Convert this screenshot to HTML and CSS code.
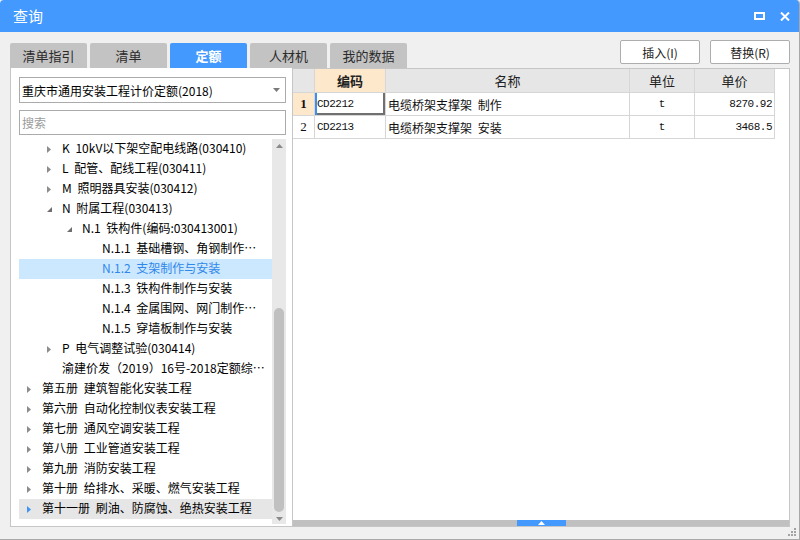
FILE: index.html
```html
<!DOCTYPE html>
<html lang="zh-CN">
<head>
<meta charset="utf-8">
<title>查询</title>
<link rel="stylesheet" href="styles.css">
</head>
<body>
<div class="window">
  <div class="titlebar">
    <span class="title">查询</span>
    <div class="win-ctrls">
      <svg width="11" height="8" viewBox="0 0 11 8"><rect x="1" y="1" width="9" height="6" fill="none" stroke="#fff" stroke-width="2"/></svg>
      <svg width="10" height="9" viewBox="0 0 10 9"><path d="M1 0.5 L9 8.5 M9 0.5 L1 8.5" stroke="#fff" stroke-width="2"/></svg>
    </div>
  </div>

  <div class="toolbar">
    <div class="tabs">
      <div class="tab">清单指引</div>
      <div class="tab">清单</div>
      <div class="tab active">定额</div>
      <div class="tab">人材机</div>
      <div class="tab">我的数据</div>
    </div>
    <div class="actions">
      <button class="btn">插入(I)</button>
      <button class="btn">替换(R)</button>
    </div>
  </div>

  <div class="main">
    <div class="left">
      <div class="select">
        <span>重庆市通用安装工程计价定额(2018)</span>
        <svg width="7" height="4" viewBox="0 0 7 4"><path d="M0 0 H7 L3.5 4 Z" fill="#7a7a7a"/></svg>
      </div>
      <input class="search" type="text" placeholder="搜索">
      <div class="tree">
        <div class="tree-list">
          <div class="row lv1"><span class="tog"><svg width="4" height="7" viewBox="0 0 4 7"><path d="M0 0 L4 3.5 L0 7 Z" fill="#8c8c8c"/></svg></span><span class="tx">K 10kV以下架空配电线路(030410)</span></div>
          <div class="row lv1"><span class="tog"><svg width="4" height="7" viewBox="0 0 4 7"><path d="M0 0 L4 3.5 L0 7 Z" fill="#8c8c8c"/></svg></span><span class="tx">L 配管、配线工程(030411)</span></div>
          <div class="row lv1"><span class="tog"><svg width="4" height="7" viewBox="0 0 4 7"><path d="M0 0 L4 3.5 L0 7 Z" fill="#8c8c8c"/></svg></span><span class="tx">M 照明器具安装(030412)</span></div>
          <div class="row lv1"><span class="tog"><svg width="5" height="5" viewBox="0 0 5 5"><path d="M5 0 L5 5 L0 5 Z" fill="#6e6e6e"/></svg></span><span class="tx">N 附属工程(030413)</span></div>
          <div class="row lv2"><span class="tog"><svg width="5" height="5" viewBox="0 0 5 5"><path d="M5 0 L5 5 L0 5 Z" fill="#6e6e6e"/></svg></span><span class="tx">N.1 铁构件(编码:030413001)</span></div>
          <div class="row lv3"><span class="tog"></span><span class="tx">N.1.1 基础槽钢、角钢制作…</span></div>
          <div class="row lv3 sel"><span class="tog"></span><span class="tx">N.1.2 支架制作与安装</span></div>
          <div class="row lv3"><span class="tog"></span><span class="tx">N.1.3 铁构件制作与安装</span></div>
          <div class="row lv3"><span class="tog"></span><span class="tx">N.1.4 金属围网、网门制作…</span></div>
          <div class="row lv3"><span class="tog"></span><span class="tx">N.1.5 穿墙板制作与安装</span></div>
          <div class="row lv1"><span class="tog"><svg width="4" height="7" viewBox="0 0 4 7"><path d="M0 0 L4 3.5 L0 7 Z" fill="#8c8c8c"/></svg></span><span class="tx">P 电气调整试验(030414)</span></div>
          <div class="row lv1"><span class="tog"></span><span class="tx">渝建价发（2019）16号-2018定额综…</span></div>
          <div class="row lv0"><span class="tog"><svg width="4" height="7" viewBox="0 0 4 7"><path d="M0 0 L4 3.5 L0 7 Z" fill="#8c8c8c"/></svg></span><span class="tx">第五册 建筑智能化安装工程</span></div>
          <div class="row lv0"><span class="tog"><svg width="4" height="7" viewBox="0 0 4 7"><path d="M0 0 L4 3.5 L0 7 Z" fill="#8c8c8c"/></svg></span><span class="tx">第六册 自动化控制仪表安装工程</span></div>
          <div class="row lv0"><span class="tog"><svg width="4" height="7" viewBox="0 0 4 7"><path d="M0 0 L4 3.5 L0 7 Z" fill="#8c8c8c"/></svg></span><span class="tx">第七册 通风空调安装工程</span></div>
          <div class="row lv0"><span class="tog"><svg width="4" height="7" viewBox="0 0 4 7"><path d="M0 0 L4 3.5 L0 7 Z" fill="#8c8c8c"/></svg></span><span class="tx">第八册 工业管道安装工程</span></div>
          <div class="row lv0"><span class="tog"><svg width="4" height="7" viewBox="0 0 4 7"><path d="M0 0 L4 3.5 L0 7 Z" fill="#8c8c8c"/></svg></span><span class="tx">第九册 消防安装工程</span></div>
          <div class="row lv0"><span class="tog"><svg width="4" height="7" viewBox="0 0 4 7"><path d="M0 0 L4 3.5 L0 7 Z" fill="#8c8c8c"/></svg></span><span class="tx">第十册 给排水、采暖、燃气安装工程</span></div>
          <div class="row lv0 hover"><span class="tog"><svg width="4" height="7" viewBox="0 0 4 7"><path d="M0 0 L4 3.5 L0 7 Z" fill="#3f95f5"/></svg></span><span class="tx">第十一册 刷油、防腐蚀、绝热安装工程</span></div>
        </div>
        <div class="vscroll">
          <div class="sb-up"><svg width="7" height="4" viewBox="0 0 7 4"><path d="M3.5 0 L7 4 H0 Z" fill="#8a8a8a"/></svg></div>
          <div class="sb-gap"></div>
          <div class="sb-thumb"></div>
          <div class="sb-down"><svg width="7" height="4" viewBox="0 0 7 4"><path d="M0 0 H7 L3.5 4 Z" fill="#8a8a8a"/></svg></div>
        </div>
      </div>
    </div>

    <div class="right">
      <div class="grid">
        <div class="hd"></div>
        <div class="hd cur">编码</div>
        <div class="hd">名称</div>
        <div class="hd">单位</div>
        <div class="hd">单价</div>

        <div class="num cur">1</div>
        <div class="code focus">CD2212</div>
        <div class="name">电缆桥架支撑架 制作</div>
        <div class="unit">t</div>
        <div class="price">8270.92</div>

        <div class="num">2</div>
        <div class="code">CD2213</div>
        <div class="name">电缆桥架支撑架 安装</div>
        <div class="unit">t</div>
        <div class="price">3468.5</div>
      </div>
      <div class="fill"></div>
      <div class="hbar">
        <div class="handle"><svg width="7" height="4" viewBox="0 0 7 4"><path d="M3.5 0 L7 4 H0 Z" fill="#fff"/></svg></div>
      </div>
    </div>
  </div>

  <div class="footer">
    <svg width="8" height="8" viewBox="0 0 8 8" fill="#a3a3a3">
      <rect x="6" y="0" width="2" height="2"/>
      <rect x="3" y="3" width="2" height="2"/><rect x="6" y="3" width="2" height="2"/>
      <rect x="0" y="6" width="2" height="2"/><rect x="3" y="6" width="2" height="2"/><rect x="6" y="6" width="2" height="2"/>
    </svg>
  </div>
</div>
</body>
</html>
```

FILE: styles.css
```css
* { box-sizing: border-box; }
html, body { margin: 0; padding: 0; }
body {
  width: 800px;
  height: 540px;
  overflow: hidden;
  background: #f0f0f0;
  font-family: "Noto Sans CJK SC", "Noto Sans", sans-serif;
  font-size: 12px;
  color: #111;
}

.window {
  width: 800px;
  height: 540px;
  display: flex;
  flex-direction: column;
  background: #f0f0f0;
  border-right: 1px solid #a8a8a8;
  border-bottom: 1px solid #a8a8a8;
  border-radius: 4px 4px 0 0;
  overflow: hidden;
}

/* title bar */
.titlebar {
  height: 32px;
  flex: none;
  background: #4499ff;
  color: #fff;
  display: flex;
  align-items: center;
  justify-content: space-between;
  padding: 0 9px 0 13px;
}
.title { font-size: 15px; line-height: 32px; }
.win-ctrls { display: flex; align-items: center; gap: 15px; }
.win-ctrls svg { display: block; }

/* tabs + buttons */
.toolbar {
  height: 36px;
  flex: none;
  display: flex;
  justify-content: space-between;
  padding: 0 9px 0 10px;
}
.tabs { display: flex; gap: 3px; align-self: flex-end; }
.tab {
  width: 77px;
  height: 25px;
  background: #c3c3c3;
  border-radius: 2px 2px 0 0;
  text-align: center;
  line-height: 25px;
  font-size: 13px;
  color: #2b2b2b;
}
.tab.active { background: #4499ff; color: #fff; font-weight: bold; }
.actions { display: flex; gap: 10px; margin-top: 8px; }
.btn {
  width: 80px;
  height: 24px;
  padding: 0;
  background: #fff;
  border: 1px solid #adadad;
  border-radius: 2px;
  font-family: "Noto Sans CJK SC", "Noto Sans", sans-serif;
  font-size: 12px;
  color: #222;
}

/* main */
.main {
  height: 459px;
  flex: none;
  display: flex;
  padding: 0 9px 0 10px;
}

.left {
  width: 282px;
  flex: none;
  background: #fff;
  border-left: 1px solid #c6c6c6;
  border-bottom: 1px solid #c6c6c6;
  padding: 9px 6px 2px 8px;
  display: flex;
  flex-direction: column;
}
.select {
  height: 26px;
  flex: none;
  border: 1px solid #ababab;
  display: flex;
  align-items: center;
  justify-content: space-between;
  padding: 0 5px 0 2px;
  font-size: 12px;
  color: #000;
}
.select svg { display: block; }
.search {
  margin-top: 7px;
  height: 25px;
  flex: none;
  width: 100%;
  border: 1px solid #ababab;
  padding: 0 2px;
  font-family: "Noto Sans CJK SC", "Noto Sans", sans-serif;
  font-size: 12px;
  outline: none;
  border-radius: 0;
}
.search::placeholder { color: #9c9c9c; }

.tree {
  margin-top: 4px;
  flex: 1;
  min-height: 0;
  display: flex;
}
.tree-list { flex: 1; min-width: 0; overflow: hidden; }
.row {
  height: 20px;
  display: flex;
  align-items: center;
  white-space: nowrap;
  color: #000;
  font-size: 12px;
  word-spacing: 3px;
}
.tx { line-height: 16px; padding-bottom: 2px; }
.tog { width: 15px; flex: none; display: flex; align-items: center; }
.tog svg { display: block; }
.lv0 { padding-left: 8px; }
.lv1 { padding-left: 28px; }
.lv2 { padding-left: 48px; }
.lv3 { padding-left: 68px; }
.row.sel { background: #cce8ff; color: #2f87ea; }
.row.hover { background: #e6e6e6; }

.vscroll {
  width: 14px;
  flex: none;
  background: #e8e8e8;
  display: flex;
  flex-direction: column;
  align-items: center;
}
.sb-up { height: 20px; flex: none; padding-top: 5px; }
.sb-up svg, .sb-down svg { display: block; }
.sb-gap { height: 149px; flex: none; }
.sb-thumb { flex: 1; width: 10px; background: #c0c0c0; border-radius: 5px; }
.sb-down { height: 12px; flex: none; padding-top: 5px; }

/* right: grid */
.right {
  flex: 1;
  min-width: 0;
  background: #fff;
  border: 1px solid #c6c6c6;
  display: flex;
  flex-direction: column;
}
.grid {
  display: grid;
  grid-template-columns: 22px 71px 244px 65px 80px;
  grid-template-rows: 24px 23px 23px;
}
.grid > div {
  border-right: 1px solid #d6d6d6;
  border-bottom: 1px solid #d6d6d6;
  white-space: nowrap;
  overflow: hidden;
  display: flex;
  align-items: center;
}
.hd {
  background: #e6e6e6;
  justify-content: center;
  font-size: 13px;
  color: #222;
}
.grid > .cur { background: #fee8cc; font-weight: bold; }
.num { justify-content: center; font-family: "Liberation Serif", "Noto Sans CJK SC", serif; font-size: 13px; }
.code, .price {
  font-family: "Liberation Mono", monospace;
  font-size: 11px;
  letter-spacing: -0.5px;
}
.code { padding-left: 2px; }
.focus { box-shadow: inset 2px 0 0 #3d8ef0, inset -2px -2px 0 #707070; }
.name { padding-left: 2px; font-size: 12px; word-spacing: 3px; }
.unit { justify-content: center; font-family: "Liberation Mono", monospace; font-size: 11px; }
.grid > .price { justify-content: flex-end; padding-right: 2px; }

.fill { flex: 1; }
.hbar {
  height: 6px;
  flex: none;
  background: #c0c0c0;
  display: flex;
  justify-content: center;
}
.handle {
  width: 49px;
  background: #4499ff;
  display: flex;
  justify-content: center;
  padding-top: 1px;
}
.handle svg { display: block; }

.footer {
  height: 12px;
  flex: none;
  display: flex;
  justify-content: flex-end;
  align-items: flex-start;
  padding: 1px 3px 0 0;
}
.footer svg { display: block; }
```
